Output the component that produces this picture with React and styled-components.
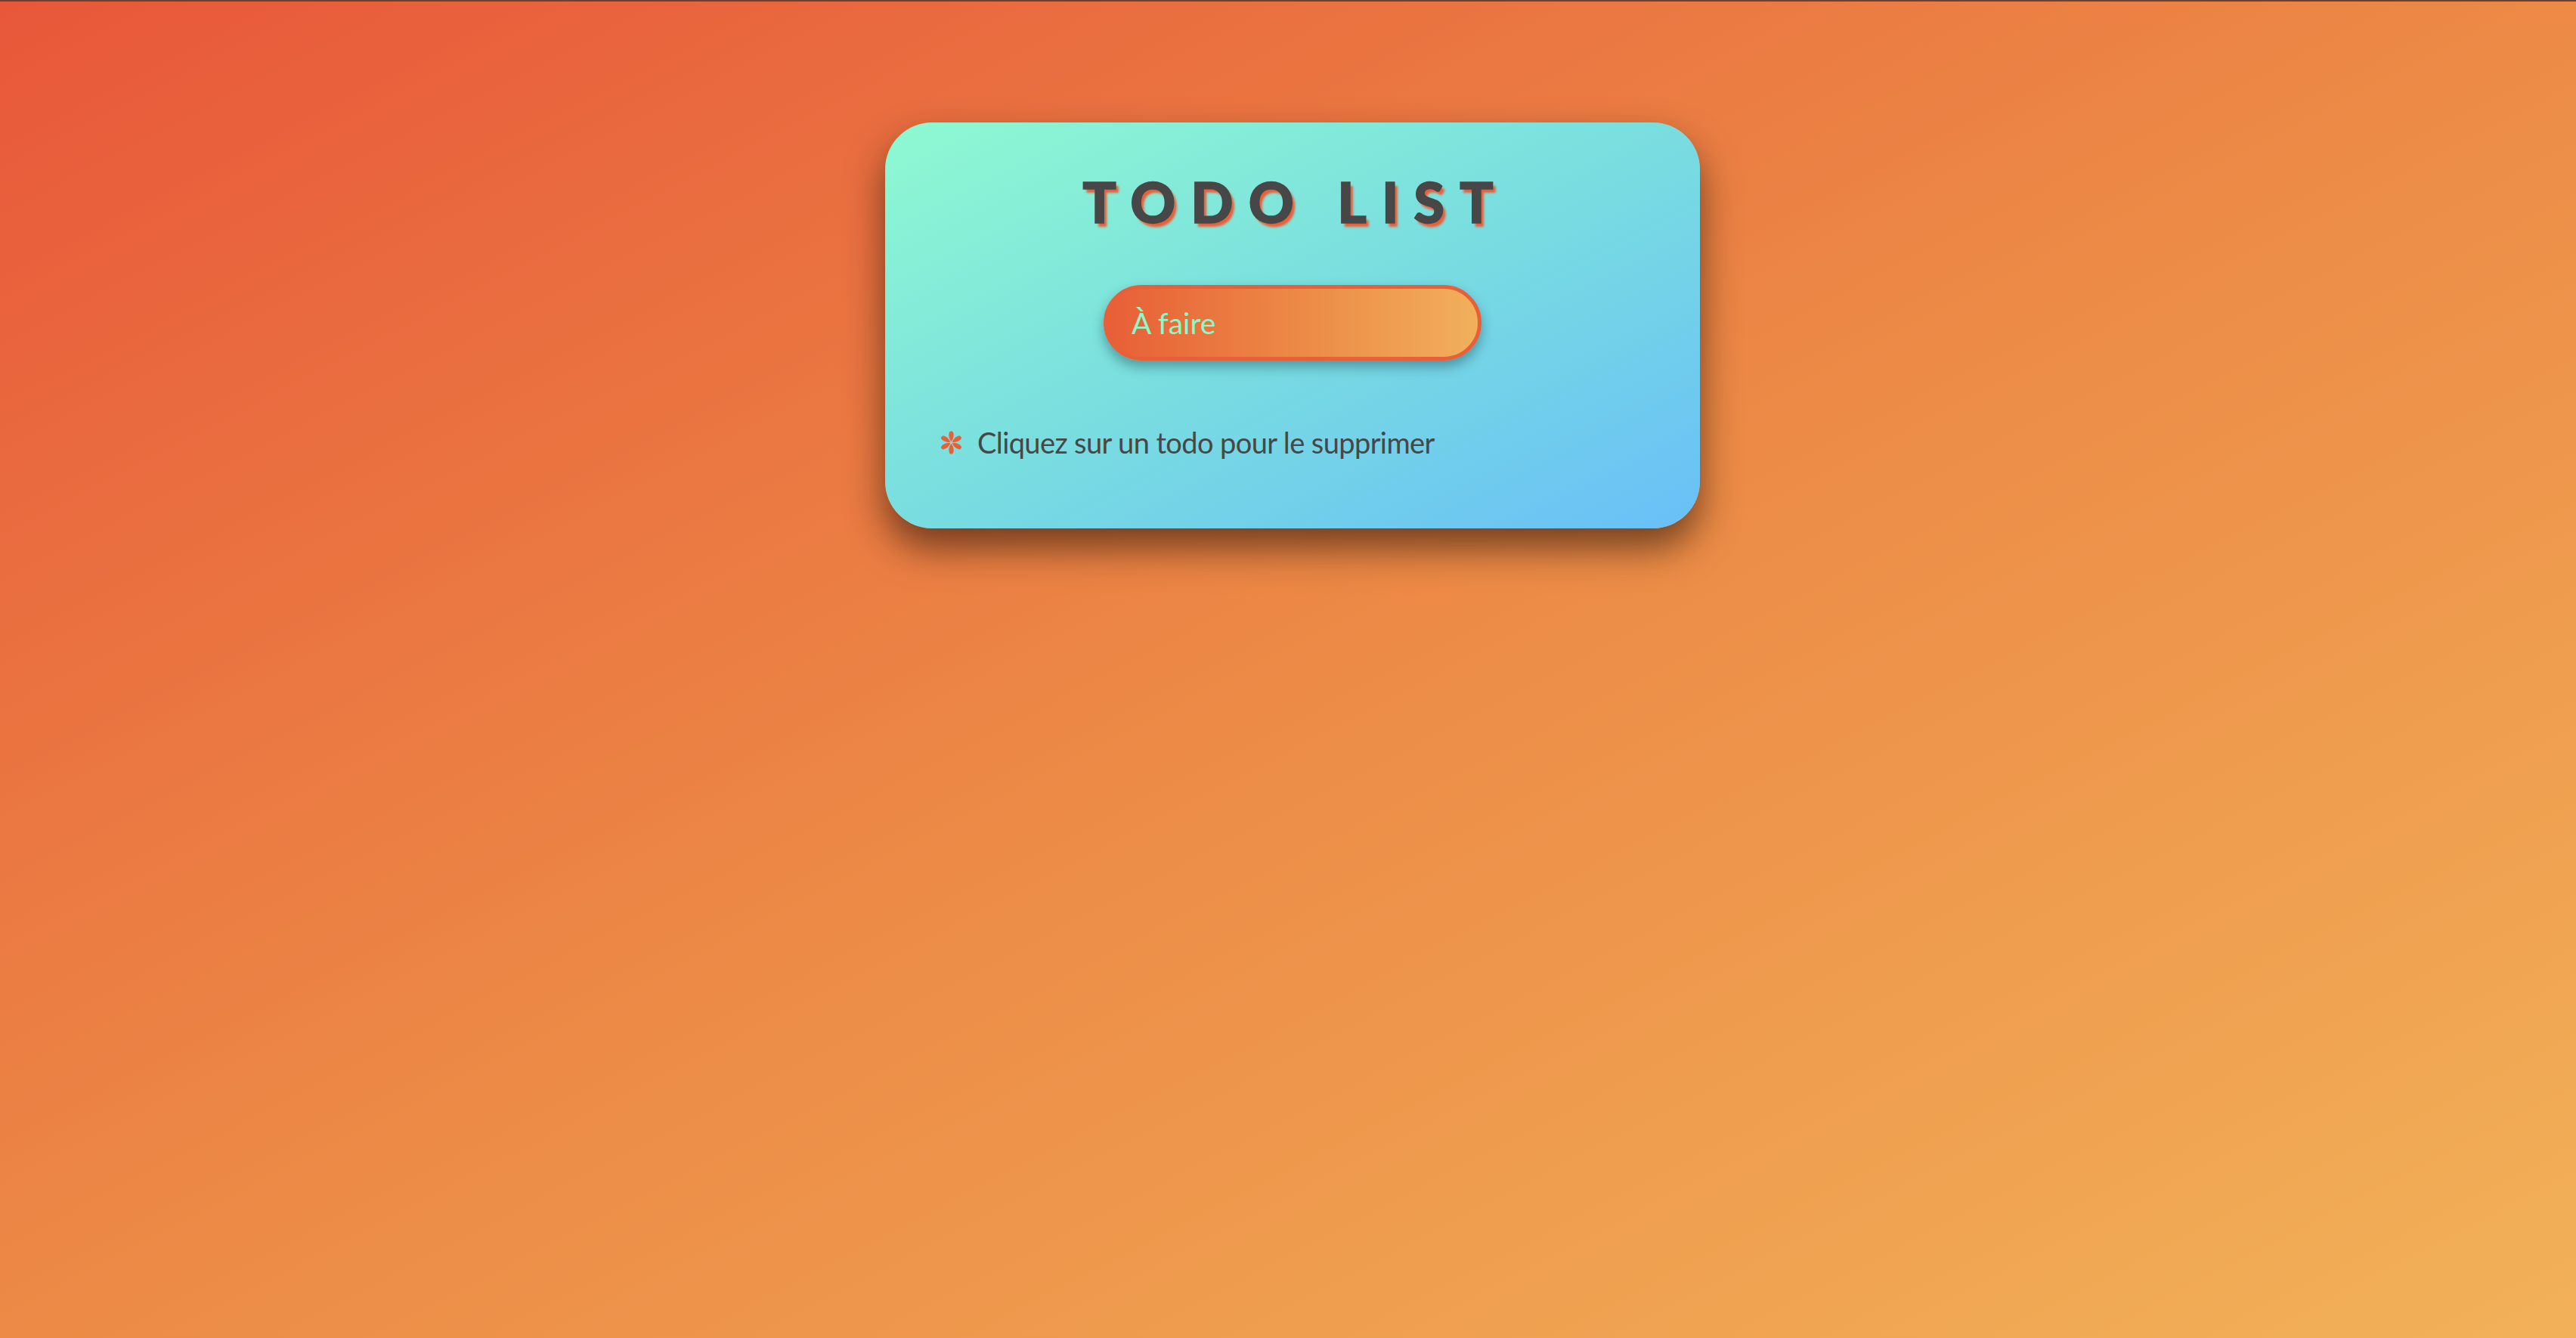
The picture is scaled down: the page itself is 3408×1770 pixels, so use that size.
import React, { useState } from "react";
import styled, { createGlobalStyle } from "styled-components";

const GlobalStyle = createGlobalStyle`
  html, body {
    margin: 0;
    padding: 0;
    height: 100%;
  }
  body {
    font-family: "Lato", "Liberation Sans", sans-serif;
  }
  #root {
    min-height: 100%;
  }
`;

const Page = styled.div`
  min-height: 100vh;
  box-sizing: border-box;
  border-top: 2px solid #6a4234;
  background: linear-gradient(to bottom right, #e8573a 0%, #ec8a46 50%, #f2b158 100%);
  display: flex;
  flex-direction: column;
  align-items: center;
  padding: 160px 0 0 12px;
`;

const Card = styled.div`
  width: 1078px;
  box-sizing: border-box;
  padding: 60px 72px 90px;
  border-radius: 62px;
  background: linear-gradient(to bottom right, #8ff9d1 0%, #79dde0 50%, #69bff7 100%);
  box-shadow: 0 26px 50px rgba(40, 20, 10, 0.62);
  display: flex;
  flex-direction: column;
`;

const Title = styled.h1`
  margin: 0;
  text-align: center;
  font-family: "Lato", "Liberation Sans", sans-serif;
  font-weight: 900;
  font-size: 74px;
  line-height: 90px;
  letter-spacing: 20px;
  padding-left: 8px;
  color: #474747;
  -webkit-text-stroke: 1.5px #474747;
  text-shadow: 4px 5px 3px #e8603a;
`;

const Form = styled.form`
  display: flex;
  justify-content: center;
  margin-top: 65px;
`;

const TodoInput = styled.input`
  width: 500px;
  height: 100px;
  box-sizing: border-box;
  border: 5px solid #e8603a;
  border-radius: 50px;
  padding: 0 32px;
  background: linear-gradient(to right, #e85f37 0%, #ec8c47 55%, #f1b05c 100%);
  box-shadow: 0 8px 16px rgba(20, 50, 60, 0.4);
  font-family: "Lato", "Liberation Sans", sans-serif;
  font-size: 39px;
  color: #8ef8c8;
  outline: none;

  &::placeholder {
    color: #8ef8c8;
    opacity: 1;
  }
`;

const List = styled.ul`
  list-style: none;
  margin: 0;
  padding: 0;
`;

const Note = styled.p`
  margin: 86px 0 0;
  display: flex;
  align-items: center;
  gap: 19px;
  font-family: "Lato", "Liberation Sans", sans-serif;
  font-size: 38px;
  line-height: 1.2;
  letter-spacing: -0.6px;
  color: #474747;
`;

const Star = () => (
  <svg width="31" height="31" viewBox="0 0 30 30" aria-hidden="true">
    <g fill="#e8603a" transform="translate(15 15)">
      {[0, 60, 120, 180, 240, 300].map((a) => (
        <path
          key={a}
          transform={`rotate(${a})`}
          d="M0 -1.5 C -3.2 -5 -3.6 -10 -2.4 -13.2 C -1.6 -15 1.6 -15 2.4 -13.2 C 3.6 -10 3.2 -5 0 -1.5 Z"
        />
      ))}
    </g>
  </svg>
);

export default function App() {
  const [todos, setTodos] = useState([]);
  const [value, setValue] = useState("");

  const handleSubmit = (e) => {
    e.preventDefault();
    if (!value.trim()) return;
    setTodos([...todos, value.trim()]);
    setValue("");
  };

  return (
    <>
      <GlobalStyle />
      <Page>
        <Card>
          <Title>TODO LIST</Title>
          <Form onSubmit={handleSubmit}>
            <TodoInput
              type="text"
              placeholder="À faire"
              value={value}
              onChange={(e) => setValue(e.target.value)}
            />
          </Form>
          <List>
            {todos.map((t, i) => (
              <li key={i} onClick={() => setTodos(todos.filter((_, j) => j !== i))}>
                {t}
              </li>
            ))}
          </List>
          <Note>
            <Star />
            Cliquez sur un todo pour le supprimer
          </Note>
        </Card>
      </Page>
    </>
  );
}
